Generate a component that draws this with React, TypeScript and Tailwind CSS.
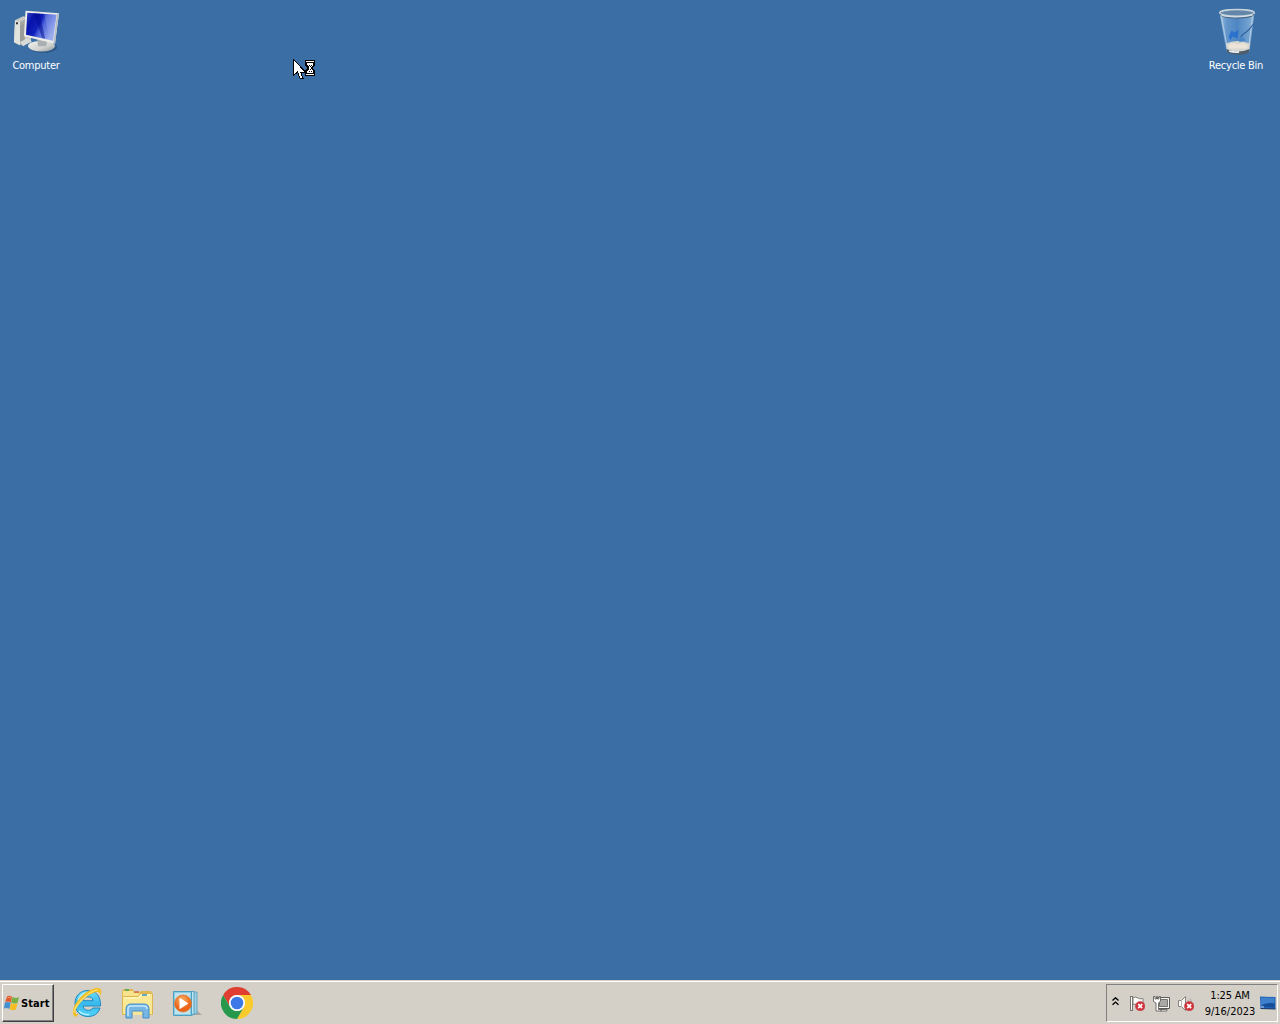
import type { ReactNode } from 'react';

interface DesktopIconProps {
  label: string;
  labelClass: string;
  children: ReactNode;
}

const ComputerIcon = () => (
  <svg width="48" height="48" viewBox="0 .7 48 48">
    <defs>
      <linearGradient id="screen" x1="0" y1="0" x2="1" y2="0.5">
        <stop offset="0" stopColor="#3a4cc8" />
        <stop offset="0.25" stopColor="#0712a8" />
        <stop offset="0.5" stopColor="#1020bc" />
        <stop offset="0.62" stopColor="#4a60d8" />
        <stop offset="1" stopColor="#a0b2f0" />
      </linearGradient>
      <linearGradient id="stand" x1="0" y1="0" x2="1" y2="1">
        <stop offset="0" stopColor="#f4f4f0" />
        <stop offset="0.6" stopColor="#d0d2d0" />
        <stop offset="1" stopColor="#8c9498" />
      </linearGradient>
    </defs>
    <path d="M3 13 11 9l8 2v24L8 38 2 35Z" fill="#c9cac4" />
    <path d="M3 13l5 2v23l-6-3Z" fill="#e2e2dc" />
    <path d="M8 15l5-3v24l-5 2Z" fill="#a5a7a1" />
    <path d="M9 18v16M11 17v17" stroke="#85898a" strokeWidth=".7" />
    <rect x="4" y="15" width="2" height="2" fill="#333" />
    <path d="M8 35l7-4 5 3-9 5Z" fill="#d8dad8" />
    <ellipse cx="31" cy="40" rx="14" ry="5.500" fill="#203f6c" opacity=".5" />
    <ellipse cx="29.500" cy="38.800" rx="13.500" ry="5.400" fill="url(#stand)" />
    <path d="M25 31h11l-2 8h-8Z" fill="#aab0b2" />
    <path d="M13.500 3.500 47 6 43 36.500 12 29Z" fill="#ecede9" />
    <path d="M47 6 43 36.500l-1.500-1L45 6.500Z" fill="#b8bdc4" />
    <path d="M15.300 5.500 44.500 7.500 41 33.500 14 27.500Z" fill="url(#screen)" />
    <path d="M22 6.200l6 .3 5 25-3-1Z" fill="#000a90" opacity=".5" />
    <path d="M32 6.800 44.500 7.500 41 33.500l-3-.8Z" fill="#8fa0ec" opacity=".35" />
  </svg>
);

const RecycleBinIcon = () => (
  <svg width="48" height="48" viewBox="-1.500 .5 48 48">
    <defs>
      <linearGradient id="bin" x1="0" y1="0" x2="1" y2="0">
        <stop offset="0" stopColor="#9fc0de" />
        <stop offset="0.2" stopColor="#6397cc" />
        <stop offset="0.5" stopColor="#4e86c2" />
        <stop offset="0.8" stopColor="#6f9fce" />
        <stop offset="1" stopColor="#8eb2d4" />
      </linearGradient>
    </defs>
    <path d="M6 5h35l-5 39q-11 5-23 0Z" fill="url(#bin)" />
    <path d="M8 9l6 33M39 9l-4 33" stroke="#b8d1e7" strokeWidth="1.200" opacity=".8" />
    <path d="M12.500 36q11-5 24 0l-1 7q-10 4-22 0Z" fill="#d6d7d0" />
    <path d="M14.500 38q4-4 9.500-1 5-3 10.500 1l-1 3h-18Z" fill="#ebe3d8" />
    <path d="M13 41.500q11 5 23 0l-.5 3.500q-10 4.500-22 0Z" fill="#4e5e68" />
    <path d="M15.500 43.500q4.500 1.500 10 1" stroke="#e8eff3" strokeWidth="1.800" fill="none" />
    <path d="M15 29l3-6 3 2 4-3-1 9-5-2-2 4Z" fill="#1e69d0" opacity=".75" />
    <path d="M25 32l5-2 2 3-6 2Z" fill="#397bc8" opacity=".6" />
    <path d="M39.500 17q-4 6-8 8.500t-4 4.500" stroke="#2b609c" strokeWidth="1.200" fill="none" />
    <ellipse cx="23.500" cy="5.300" rx="17.300" ry="3.300" fill="#6487a9" stroke="#c8d5de" strokeWidth="1.400" />
    <path d="M6.500 6.500q1 4 17 4t17-4" stroke="#4c6073" strokeWidth="1" fill="none" />
    <path d="M8 8q14 3 31-.5" stroke="#d8e2e9" strokeWidth="1.200" fill="none" />
  </svg>
);

const BusyCursor = () => (
  <svg width="24" height="22" viewBox="0 0 24 22" shapeRendering="crispEdges">
    <path d="M.5.5v16l4-3.500 2.500 6h3l-2.500-6h5Z" fill="#fff" stroke="#000" strokeWidth="1" />
    <path d="M12 1h10v5l-2 3 2 3v5H12v-5l2-3-2-3Z" fill="#000" />
    <path d="M13 2h8v1h-8ZM13 15h8v1h-8ZM14 4h6v2l-2 2v2l2 2v2h-6v-2l2-2V8l-2-2Z" fill="#fff" />
    <path d="M16 6h1v1h-1ZM18 6h1v1h-1ZM17 7h1v1h-1ZM17 10h1v1h-1ZM16 12h1v1h-1ZM18 12h1v1h-1Z" fill="#000" />
  </svg>
);

const WindowsLogo = () => (
  <svg width="16" height="16" viewBox="0 0 16 16">
    <path d="M3 1.500Q5.500-.200 8 1.800L6.900 7.500Q4 5.800 1.200 7.200Z" fill="#e05a2b" />
    <path d="M8.400 2.100q3 1.600 6.700.100l-1.600 5.700q-3 1.400-6.300-.1Z" fill="#78b043" />
    <path d="M.900 7.600q2.700-1.300 5.800.200L5.300 13.900Q2.500 12.200-.1 13.500Z" fill="#4290d0" />
    <path d="M7 8.200q3 1.500 6.500.100L12 14.500q-3 1.400-6.300-.3Z" fill="#f6bd22" />
    <path d="M3.500 2.800q2-1 3.500 0" stroke="#ffa374" fill="none" />
  </svg>
);

const InternetExplorerIcon = () => (
  <svg width="32" height="32" viewBox="0 0 32 32">
    <defs>
      <linearGradient id="ie" x1="0" y1="0" x2="0" y2="1">
        <stop offset="0" stopColor="#6edcfb" />
        <stop offset="0.5" stopColor="#37b9ed" />
        <stop offset="1" stopColor="#55d3f7" />
      </linearGradient>
    </defs>
    <path
      fillRule="evenodd"
      d="M17 3.500C25 3.500 30 9.500 29.500 19H12c.5 3 2.500 4.300 5.300 4.300 2.300 0 3.700-.8 4.500-2.300H29C27.500 26.500 23 29.500 17 29.500 9 29.500 4 24 4 16.500S9 3.500 17 3.500ZM12 13.700h10c-.4-2.600-2.200-3.900-5-3.900s-4.500 1.300-5 3.900Z"
      fill="url(#ie)"
      stroke="#2187bd"
      strokeWidth="1"
    />
    <path d="M7 13Q10 6 17 5.500M8 24q4 4 10 3.500" stroke="#b6f2ff" strokeWidth="1.300" fill="none" />
    <path
      d="M4.500 30C-2 26.500 4.500 14 12.500 7.500 19 2 27.500-1 29.800 2.600c1 1.700.6 4.200-1 6.900.6-3-.1-4.500-2.600-4.500C18 5.500 4 19 4.500 25.500c.2 1.500 1.300 2 3.200 1.300-1 1.200-1.800 2.300-3.200 3.200Z"
      fill="#f3bf25"
    />
    <path d="M2.800 25.500C4 18 18 3.500 27 2.800" stroke="#ffe77b" strokeWidth="1.100" fill="none" />
  </svg>
);

const ExplorerIcon = () => (
  <svg width="34" height="32" viewBox="0 0 34 32">
    <path d="M1 5 2 2h10l1 3h6l1-1h10l1 3v20H1Z" fill="#dfb951" />
    <path d="M2 4h10l1 2h17v20H2Z" fill="#f8e38d" />
    <path d="M4 3h4" stroke="#43a15a" strokeWidth="1.500" />
    <path d="M13 5h5" stroke="#d76946" strokeWidth="1.500" />
    <path d="M1 9h16l2-3h12v22H1Z" fill="#fae994" />
    <path d="M1.500 9.500H17l2-3h12.500v21h-30Z" fill="none" stroke="#ddb64d" />
    <path d="M3 11h15l2-3h9" stroke="#fffbd5" fill="none" />
    <path d="M21 8h5" stroke="#348fca" strokeWidth="1.500" />
    <path d="M5 22q0-5 5-5h13q5 0 5 5v9h-6v-6q0-1-1-1H12q-1 0-1 1v6H5Z" fill="#77b5e3" stroke="#448ecc" />
    <path d="M7 29v-7q0-3 3-3h13q3 0 3 3" fill="none" stroke="#c2eaff" strokeWidth="1.500" />
    <path d="M12 25h9v3h-9Z" fill="#f5e699" />
  </svg>
);

const MediaPlayerIcon = () => (
  <svg width="32" height="32" viewBox="0 0 32 32">
    <defs>
      <radialGradient id="play" cx=".45" cy=".3">
        <stop offset="0" stopColor="#ffb468" />
        <stop offset="1" stopColor="#ea6419" />
      </radialGradient>
    </defs>
    <path d="M23 28h8l-6-5Z" fill="#aaa79f" />
    <path d="M14 5h12v21.500l-6 2Z" fill="#9bcfe2" stroke="#569ebf" strokeWidth=".8" />
    <path d="M11 4.500h12V27l-5 1Z" fill="#bde4f0" stroke="#4694ba" strokeWidth=".8" />
    <path d="M2.500 4.500h18v24h-18Z" fill="#8bcce3" stroke="#4d9fc0" />
    <path d="M4 6h15v21H4Z" fill="#bfe3ec" />
    <circle cx="12" cy="16.500" r="8.500" fill="url(#play)" stroke="#e0752c" strokeWidth=".7" />
    <path d="M8.500 10.800v11.400l9-5.700Z" fill="#fff" />
  </svg>
);

const ChromeIcon = () => (
  <svg width="32" height="32" viewBox="0 0 32 32">
    <path d="M2.140 8A16 16 0 0 1 29.860 8H16a8 8 0 0 0-6.930 12Z" fill="#df3e31" />
    <path d="M29.860 8A16 16 0 0 1 16 32l6.930-12A8 8 0 0 0 16 8Z" fill="#fbcb2d" />
    <path d="M16 32A16 16 0 0 1 2.140 8l6.930 12a8 8 0 0 0 13.860 0Z" fill="#27994c" />
    <circle cx="16" cy="16" r="8" fill="#fff" />
    <circle cx="16" cy="16" r="6.300" fill="#3c79e6" />
  </svg>
);

const ErrorBadge = () => (
  <g>
    <circle cx="11.200" cy="11.200" r="4.800" fill="#d2303a" stroke="#b8545a" strokeWidth=".6" />
    <path d="m9.200 9.200 4 4m0-4-4 4" stroke="#fff" strokeWidth="1.700" />
  </g>
);

const FlagIcon = () => (
  <svg width="16" height="16" viewBox="0 0 16 16">
    <path d="M1.500 1v14M3.500 1v14M1 1.500h3M1 15.500h3" stroke="#77736e" />
    <path d="M2.500 2v13" stroke="#fff" />
    <path d="M4 2.500q3-1 5 .5t5 .5v7q-3 1-5-.5T4 9.500Z" fill="#faf9f7" stroke="#85817c" />
    <ErrorBadge />
  </svg>
);

const NetworkIcon = () => (
  <svg width="17" height="17" viewBox="0 0 17 17">
    <path d="M5.500 3.500h10v9h-10Z" fill="#b6b5b1" stroke="#f8f8f6" strokeWidth="2" />
    <path d="M4.500 2.500h12v11h-12Z" fill="none" stroke="#5b5956" />
    <path d="M6.500 4.500h8v7h-8Z" fill="#aaa9a5" stroke="#77746f" />
    <path d="M8 14.500h6v1.500H7.500Z" fill="#fff" stroke="#55524e" strokeWidth=".8" />
    <path d="M.5 1.500H2v2.500h1.500v-2.500h1V4H6V1.500h1.500v4.500L5.500 8v6.500H8V16H3V8L.5 6.500Z" fill="#fff" stroke="#55524e" strokeWidth=".8" />
  </svg>
);

const VolumeIcon = () => (
  <svg width="16" height="16" viewBox="0 0 16 16">
    <path d="M.500 5.500H3.500l4-4v14l-4-4H.500Z" fill="#faf9f7" stroke="#88847f" />
    <path d="M3.500 5v7" stroke="#b9b6b1" />
    <path d="M10 5q1 1.500.5 3M12 3.500q1.500 2 1.500 4" stroke="#aaa69f" fill="none" />
    <ErrorBadge />
  </svg>
);

const ShowDesktopIcon = () => (
  <svg width="16" height="14" viewBox="0 0 16 14">
    <path d="M0 .5 15.500 1v12L.5 12.500Z" fill="#2161b5" />
    <path d="m1 1.500 13.500.4V7Q8 6 1 9Z" fill="#3f80cc" />
    <path d="M1 10q7-4 13.500-2v3.500Z" fill="#164c96" />
    <path d="M.5 12.500 15.500 13" stroke="#17365f" />
    <path d="M1 11h3" stroke="#b9d7f3" />
  </svg>
);

const DesktopIcon = ({ label, labelClass, children }: DesktopIconProps) => (
  <div className="flex w-[72px] flex-col items-center">
    {children}
    <span className={`mt-[3px] text-[11px] leading-[14px] whitespace-nowrap text-white ${labelClass}`}>{label}</span>
  </div>
);

const quickLaunch = [
  { name: 'ie', icon: <InternetExplorerIcon /> },
  { name: 'explorer', icon: <ExplorerIcon /> },
  { name: 'media', icon: <MediaPlayerIcon /> },
  { name: 'chrome', icon: <ChromeIcon /> },
];

const Taskbar = () => (
  <div className="flex h-11 shrink-0 items-start border-t border-[#d4d0c8] bg-[#d4d0c8] shadow-[inset_0_1px_0_#fff]">
    {/* Start button */}
    <button className="mt-[3px] ml-[2px] flex h-[38px] w-[52px] items-center border border-t-white border-r-[#404040] border-b-[#404040] border-l-white pl-px shadow-[inset_-1px_-1px_0_#808080]">
      <WindowsLogo />
      <span className="ml-px text-[11px] leading-none font-bold tracking-[0.1px] text-black">Start</span>
    </button>

    {/* Quick launch */}
    <div className="mt-[6px] ml-[17px] flex">
      {quickLaunch.map((item) => (
        <div key={item.name} className="flex h-8 w-[50px] items-center justify-start">
          {item.icon}
        </div>
      ))}
    </div>

    {/* Notification area */}
    <div className="mt-[3px] mr-[2px] ml-auto flex h-[38px] w-[172px] items-center border border-t-[#808080] border-r-white border-b-white border-l-[#808080]">
      <svg width="7" height="9" viewBox="0 0 7 9" className="mb-1 ml-[5px]">
        <path d="M.500 3.500 3.500.800l3 2.700M.500 7.800l3-2.700 3 2.700" fill="none" stroke="#000" strokeWidth="1.400" />
      </svg>
      <div className="ml-[10px] flex items-center gap-2">
        <FlagIcon />
        <NetworkIcon />
        <VolumeIcon />
      </div>
      <div className="mt-px ml-[9px] w-[54px] text-center text-[11px] leading-4 whitespace-nowrap text-black">
        <div className="tracking-[-0.2px]">1:25 AM</div>
        <div className="tracking-[-0.05px]">9/16/2023</div>
      </div>
      <div className="ml-[3px]">
        <ShowDesktopIcon />
      </div>
    </div>
  </div>
);

export default function App() {
  return (
    <div className="relative flex h-[1024px] w-[1280px] flex-col overflow-hidden bg-[#3a6ea5] font-['DejaVu_Sans_Condensed','DejaVu_Sans',sans-serif] [font-stretch:condensed]">
      <div className="flex flex-1 items-start justify-between pt-2 pr-2">
        <DesktopIcon label="Computer" labelClass="tracking-[-0.25px]">
          <ComputerIcon />
        </DesktopIcon>
        <DesktopIcon label="Recycle Bin" labelClass="tracking-[-0.25px]">
          <RecycleBinIcon />
        </DesktopIcon>
      </div>
      <Taskbar />
      <div className="absolute top-[59px] left-[293px]">
        <BusyCursor />
      </div>
    </div>
  );
}
